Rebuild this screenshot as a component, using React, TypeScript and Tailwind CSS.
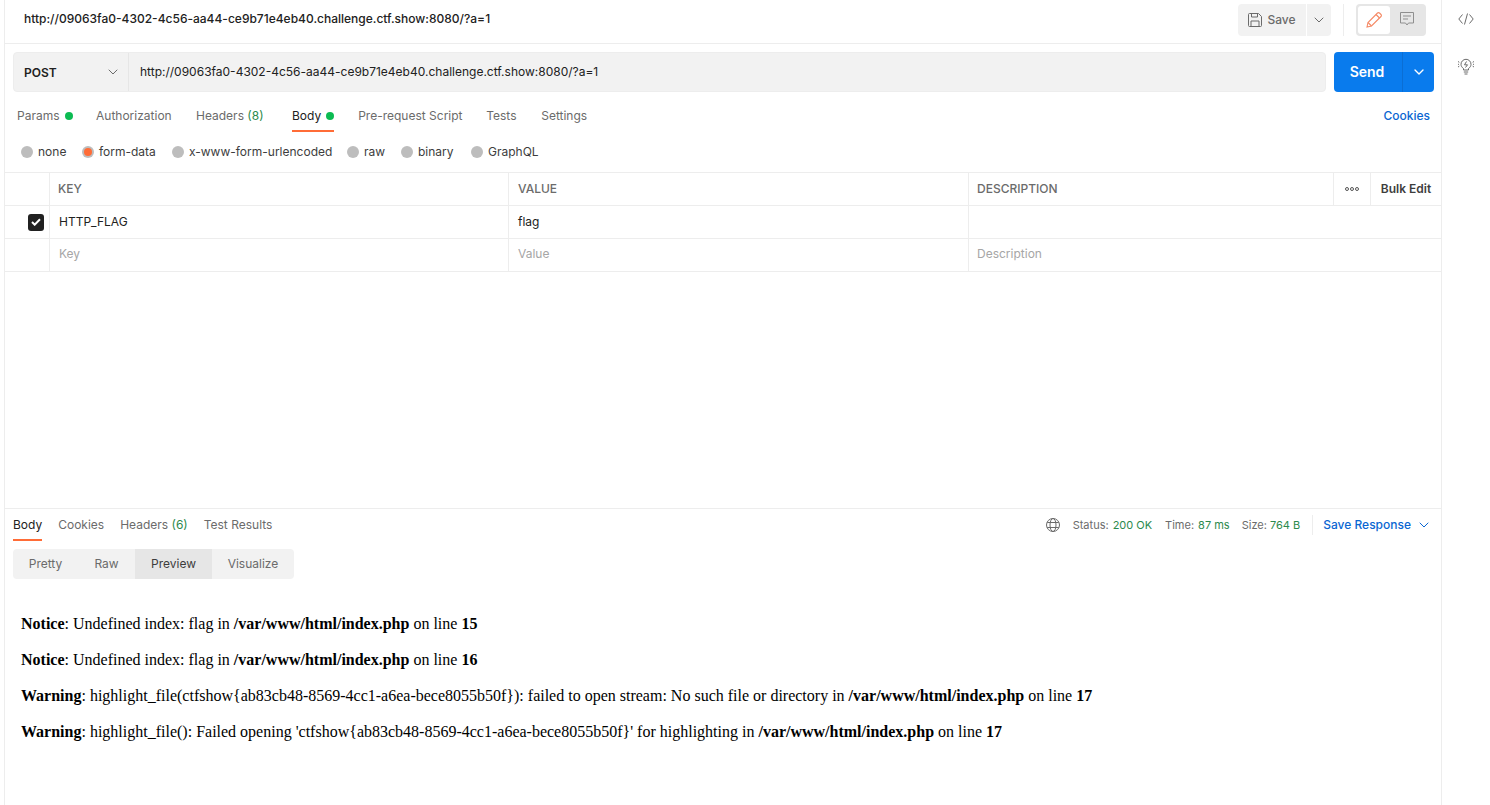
import { ChevronDown } from 'lucide-react';

const url = 'http://09063fa0-4302-4c56-aa44-ce9b71e4eb40.challenge.ctf.show:8080/?a=1';

const SaveIcon = () => (
  <svg width="14" height="14" viewBox="0 0 14 14" fill="none" stroke="#6b6b6b" strokeWidth="1">
    <path d="M0.5 1.5a1 1 0 0 1 1-1h9l3 3v9a1 1 0 0 1-1 1h-11a1 1 0 0 1-1-1z" />
    <path d="M3.5 0.5v3.5h6v-3.5M3 13.5v-5.5h8v5.5" />
  </svg>
);

const PencilIcon = () => (
  <svg width="16" height="16" viewBox="0 0 16 16" fill="none" stroke="#f58a66" strokeWidth="1.1">
    <path d="M1 15l1-4.5L11.5 1a1.4 1.4 0 0 1 2 0l1.5 1.5a1.4 1.4 0 0 1 0 2L5.5 14z" />
    <path d="M10 2.5l3.5 3.5M2 10.5l3.5 3.5" />
  </svg>
);

const CommentIcon = () => (
  <svg width="14" height="15" viewBox="0 0 14 15" fill="none" stroke="#8f8f8f" strokeWidth="1">
    <path d="M0.5 0.5h13v10.5h-5l-1.5 2-1.5-2h-5z" />
    <path d="M3 4h8M3 7h5" />
  </svg>
);

const CodeIcon = () => (
  <svg width="16" height="12" viewBox="0 0 16 12" fill="none" stroke="#6b6b6b" strokeWidth="1">
    <path d="M4.5 1.5L0.8 6l3.7 4.5M11.5 1.5L15.2 6l-3.7 4.5M9.5 0.5L6.5 11.5" />
  </svg>
);

const BulbIcon = () => (
  <svg width="16" height="17" viewBox="0 0 16 17" fill="none" stroke="#6b6b6b" strokeWidth="1">
    <path d="M5.5 12v-1.5C4 9.500 3 8 3 6.300a5 5 0 0 1 10 0c0 1.700-1 3.200-2.500 4.200V12z" />
    <path d="M5.800 14h4.400M6.500 16h3" />
    <path d="M8.500 3.500L6.500 6.800h3L7.500 9.500" />
    <path d="M0 3.500l1.300.8M0 9l1.300-.8M16 3.500l-1.300.8M16 9l-1.300-.8M0 6.300h1M15 6.300h1" />
  </svg>
);

const GlobeIcon = () => (
  <svg width="14" height="14" viewBox="0 0 14 14" fill="none" stroke="#6b6b6b" strokeWidth="1">
    <circle cx="7" cy="7" r="6.500" />
    <ellipse cx="7" cy="7" rx="3" ry="6.500" />
    <path d="M1.200 4.500h11.600M1.200 9.500h11.600" />
  </svg>
);

const CheckIcon = () => (
  <svg width="10" height="8" viewBox="0 0 10 8" fill="none" stroke="#ffffff" strokeWidth="2">
    <path d="M1 4l2.700 2.700L9 1.300" />
  </svg>
);

const Dot = () => <span className="ml-[5px] h-2 w-2 rounded-full bg-[#0cbb52]" />;

const bodyTypes = [
  { label: 'none', w: 'w-[61px]' },
  { label: 'form-data', w: 'w-[90px]', active: true },
  { label: 'x-www-form-urlencoded', w: 'w-[175px]' },
  { label: 'raw', w: 'w-[54px]' },
  { label: 'binary', w: 'w-[70px]' },
  { label: 'GraphQL', w: 'w-[80px]' },
];

const PhpLine = ({ kind, msg, file = '/var/www/html/index.php', line }: { kind: string; msg: string; file?: string; line: number }) => (
  <p className="mb-[18px] h-[18px] leading-[18px] whitespace-nowrap">
    <b>{kind}</b>: {msg} <b>{file}</b> on line <b>{line}</b>
  </p>
);

export default function App() {
  return (
    <div className="flex h-[805px] w-[1490px] overflow-hidden bg-white font-['Inter','Liberation_Sans',sans-serif] text-xs text-[#6b6b6b]">
      <div className="w-[5px] shrink-0 border-r border-[#ededed]" />

      <main className="flex w-[1437px] shrink-0 flex-col border-r border-[#ededed]">
        <header className="flex h-11 shrink-0 items-center border-b border-[#ededed] pr-[15px] pb-1 pl-[19px]">
          <div className="mb-px flex-1 font-medium text-[#212121]">{url}</div>
          <div className="flex h-8 items-stretch">
            <button className="flex w-[68px] items-center justify-center gap-[5px] rounded-l bg-[#f2f2f2] font-medium text-[#6b6b6b]">
              <SaveIcon />
              Save
            </button>
            <button className="ml-px flex w-6 items-center justify-center rounded-r bg-[#f2f2f2]">
              <ChevronDown size={16} strokeWidth={1.5} color="#6b6b6b" />
            </button>
          </div>
          <div className="mx-3 h-8 w-px bg-[#ededed]" />
          <div className="flex h-8 w-[70px] items-center rounded bg-[#e6e6e6] p-0.5">
            <div className="flex h-7 w-8 items-center justify-center rounded-[3px] bg-white">
              <PencilIcon />
            </div>
            <div className="flex h-7 w-[34px] items-center justify-center">
              <CommentIcon />
            </div>
          </div>
        </header>

        <div className="flex shrink-0 gap-2 pt-2 pr-[7px] pl-2">
          <div className="flex h-10 flex-1 rounded border border-[#ededed] bg-[#f2f2f2]">
            <div className="flex w-[115px] items-center justify-between border-r border-[#e6e6e6] pr-[7px] pl-2.5">
              <span className="mt-0.5 font-semibold text-[#212121]">POST</span>
              <ChevronDown size={16} strokeWidth={1.5} color="#6b6b6b" />
            </div>
            <div className="flex flex-1 items-center pl-[11px] text-[#212121]">{url}</div>
          </div>
          <div className="flex h-10 w-[100px] rounded bg-[#097bed] text-white">
            <div className="flex flex-1 items-center justify-center pr-0.5 text-sm font-semibold">Send</div>
            <div className="flex w-8 items-center justify-center border-l border-[#0a6ed4]">
              <ChevronDown size={16} strokeWidth={2} color="#ffffff" />
            </div>
          </div>
        </div>

        <nav className="flex h-[40px] shrink-0 items-stretch pt-2 pr-[11px] pl-3">
          <div className="flex w-[79px] items-center">Params<Dot /></div>
          <div className="flex w-[100px] items-center">Authorization</div>
          <div className="flex w-[96px] items-center">Headers&nbsp;<span className="text-[#2c8a4d]">(8)</span></div>
          <div className="relative mr-6 flex items-center text-[#212121]">
            Body<Dot />
            <span className="absolute right-0 bottom-0 left-0 h-0.5 bg-[#ff6c37]" />
          </div>
          <div className="flex w-[128px] items-center">Pre-request Script</div>
          <div className="flex w-[55px] items-center">Tests</div>
          <div className="flex flex-1 items-center">Settings</div>
          <div className="flex items-center font-medium text-[#0a66d2]">Cookies</div>
        </nav>

        <div className="flex h-10 shrink-0 items-center pl-4">
          {bodyTypes.map((t) => (
            <label key={t.label} className={`flex items-center gap-[5px] text-[#3d3d3d] ${t.w}`}>
              {t.active ? (
                <span className="flex h-3 w-3 items-center justify-center rounded-full bg-[#bdbdbd]">
                  <span className="h-2 w-2 rounded-full bg-[#ff6c37]" />
                </span>
              ) : (
                <span className="h-3 w-3 rounded-full bg-[#bdbdbd]" />
              )}
              {t.label}
            </label>
          ))}
        </div>

        <div className="shrink-0 border-t border-[#ededed]">
          <div className="grid h-[33px] grid-cols-[45px_459px_460px_365px_37px_1fr] items-stretch border-b border-[#ededed] font-medium">
            <div className="border-r border-[#ededed]" />
            <div className="flex items-center border-r border-[#ededed] pl-2">KEY</div>
            <div className="flex items-center border-r border-[#ededed] pl-[9px]">VALUE</div>
            <div className="flex items-center border-r border-[#ededed] pl-2">DESCRIPTION</div>
            <div className="flex items-center justify-center gap-px border-r border-[#ededed]">
              <span className="h-1 w-1 rounded-full border border-[#555]" />
              <span className="h-1 w-1 rounded-full border border-[#555]" />
              <span className="h-1 w-1 rounded-full border border-[#555]" />
            </div>
            <div className="flex items-center justify-center font-semibold text-[#3d3d3d]">Bulk Edit</div>
          </div>
          <div className="grid h-[33px] grid-cols-[45px_459px_460px_1fr] items-stretch border-b border-[#ededed] text-[#212121]">
            <div className="flex items-center justify-end border-r border-[#ededed] pr-[5px]">
              <span className="flex h-[17px] w-4 items-center justify-center rounded-[3px] bg-[#212121]">
                <CheckIcon />
              </span>
            </div>
            <div className="flex items-center border-r border-[#ededed] pl-[9px]">HTTP_FLAG</div>
            <div className="flex items-center border-r border-[#ededed] pl-[9px]">flag</div>
            <div />
          </div>
          <div className="grid h-[33px] grid-cols-[45px_459px_460px_1fr] items-stretch border-b border-[#ededed] text-[#a6a6a6]">
            <div className="border-r border-[#ededed]" />
            <div className="flex items-center border-r border-[#ededed] pb-0.5 pl-[9px]">Key</div>
            <div className="flex items-center border-r border-[#ededed] pb-0.5 pl-[9px]">Value</div>
            <div className="flex items-center pb-0.5 pl-2">Description</div>
          </div>
        </div>

        <div className="flex-1" />

        <section className="h-[297px] shrink-0 border-t border-[#ededed]">
          <div className="flex h-[32px] items-stretch pr-[9px] pl-2">
            <div className="relative mr-4 flex items-center text-[#212121]">
              Body
              <span className="absolute right-0 bottom-0 left-0 h-0.5 bg-[#ff6c37]" />
            </div>
            <div className="mr-4 flex items-center">Cookies</div>
            <div className="mr-4 flex items-center">Headers&nbsp;<span className="text-[#2c8a4d]">(6)</span></div>
            <div className="flex flex-1 items-center">Test Results</div>
            <div className="flex items-center text-[11px]">
              <span className="mr-[13px]"><GlobeIcon /></span>
              <span className="mr-1">Status:</span><span className="mr-[13px] text-[#2c8a4d]">200 OK</span>
              <span className="mr-1">Time:</span><span className="mr-3 text-[#2c8a4d]">87 ms</span>
              <span className="mr-[3px]">Size:</span><span className="text-[#2c8a4d]">764 B</span>
              <span className="mr-[10px] ml-3 h-5 w-px bg-[#ededed]" />
              <span className="text-xs font-medium text-[#0a66d2]">Save Response</span>
              <span className="ml-[5px]"><ChevronDown size={16} strokeWidth={1.5} color="#0a66d2" /></span>
            </div>
          </div>

          <div className="mt-2 ml-2 flex h-[30px] w-[281px] items-stretch overflow-hidden rounded bg-[#f2f2f2]">
            <div className="flex w-[65px] items-center justify-center">Pretty</div>
            <div className="flex w-[57px] items-center justify-center">Raw</div>
            <div className="flex w-[77px] items-center justify-center bg-[#e6e6e6] text-[#3d3d3d]">Preview</div>
            <div className="flex flex-1 items-center justify-center">Visualize</div>
          </div>

          <div className="pt-9 pl-4 font-['Liberation_Serif',serif] text-base text-black">
            <PhpLine kind="Notice" msg="Undefined index: flag in" line={15} />
            <PhpLine kind="Notice" msg="Undefined index: flag in" line={16} />
            <PhpLine kind="Warning" msg="highlight_file(ctfshow{ab83cb48-8569-4cc1-a6ea-bece8055b50f}): failed to open stream: No such file or directory in" line={17} />
            <PhpLine kind="Warning" msg="highlight_file(): Failed opening 'ctfshow{ab83cb48-8569-4cc1-a6ea-bece8055b50f}' for highlighting in" line={17} />
          </div>
        </section>
      </main>

      <aside className="flex flex-1 flex-col items-center pt-[13px]">
        <CodeIcon />
        <div className="mt-[33px]"><BulbIcon /></div>
      </aside>
    </div>
  );
}
